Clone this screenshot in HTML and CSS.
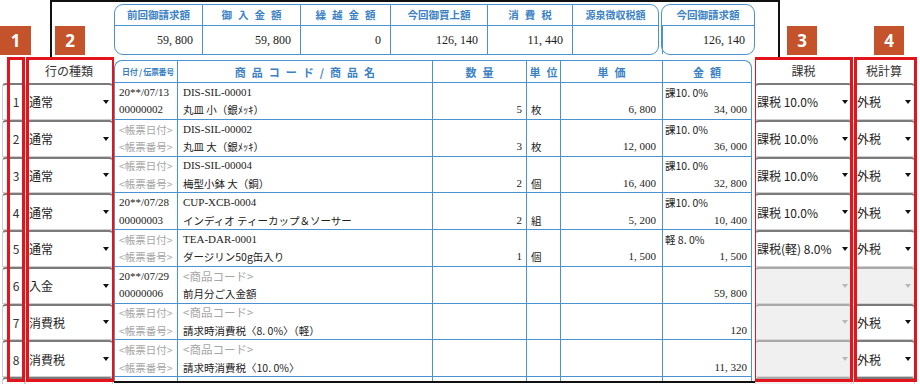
FILE: index.html
```html
<!DOCTYPE html>
<html lang="ja">
<head>
<meta charset="UTF-8">
<title>売上伝票入力</title>
<link rel="stylesheet" href="styles.css">
</head>
<body>
<div class="sheet">

  <!-- left grid: row no. / row type -->
  <div class="side left">
    <div class="side-head">
      <span class="badge b1">1</span>
      <div class="frame-l"><span class="badge">2</span></div>
    </div>
    <div class="grid-head"><span class="h-kind">行の種類</span></div>
    <div class="g-row"><div class="cell num">1</div><div class="cell kind pick">通常</div></div>
    <div class="g-row"><div class="cell num">2</div><div class="cell kind pick">通常</div></div>
    <div class="g-row"><div class="cell num">3</div><div class="cell kind pick">通常</div></div>
    <div class="g-row"><div class="cell num">4</div><div class="cell kind pick">通常</div></div>
    <div class="g-row"><div class="cell num">5</div><div class="cell kind pick">通常</div></div>
    <div class="g-row"><div class="cell num">6</div><div class="cell kind pick">入金</div></div>
    <div class="g-row"><div class="cell num">7</div><div class="cell kind pick">消費税</div></div>
    <div class="g-row"><div class="cell num">8</div><div class="cell kind pick">消費税</div></div>
    <div class="g-row"><div class="cell num"></div><div class="cell kind"></div></div>
    <div class="mark m1"></div>
    <div class="mark m2"></div>
  </div>

  <!-- slip body -->
  <div class="center">
    <div class="summary">
      <div class="sum-box">
        <div class="sum-h">前回御請求額</div>
        <div class="sum-h sp">御入金額</div>
        <div class="sum-h sp">繰越金額</div>
        <div class="sum-h">今回御買上額</div>
        <div class="sum-h sp">消費税</div>
        <div class="sum-h small">源泉徴収税額</div>
        <div class="sum-v">59, 800</div>
        <div class="sum-v">59, 800</div>
        <div class="sum-v">0</div>
        <div class="sum-v">126, 140</div>
        <div class="sum-v">11, 440</div>
        <div class="sum-v"></div>
      </div>
      <div class="sum-box total">
        <div class="sum-h">今回御請求額</div>
        <div class="sum-v">126, 140</div>
      </div>
    </div>

    <div class="items">
      <div class="i-row i-head">
        <div class="c-date">日付 / 伝票番号</div>
        <div class="sp">商品コード/商品名</div>
        <div class="sp">数量</div>
        <div class="sp">単位</div>
        <div class="sp">単価</div>
        <div class="sp">金額</div>
      </div>

      <div class="i-row">
        <div class="c-date"><span>20**/07/13</span><span>00000002</span></div>
        <div class="c-name"><span>DIS-SIL-00001</span><span class="jp">丸皿 小（銀ﾒｯｷ）</span></div>
        <div class="c-qty">5</div>
        <div class="c-unit jp">枚</div>
        <div class="c-price">6, 800</div>
        <div class="c-amt"><span class="jp">課10. 0%</span><span class="r">34, 000</span></div>
      </div>
      <div class="i-row">
        <div class="c-date"><span class="ph">&lt;帳票日付&gt;</span><span class="ph">&lt;帳票番号&gt;</span></div>
        <div class="c-name"><span>DIS-SIL-00002</span><span class="jp">丸皿 大（銀ﾒｯｷ）</span></div>
        <div class="c-qty">3</div>
        <div class="c-unit jp">枚</div>
        <div class="c-price">12, 000</div>
        <div class="c-amt"><span class="jp">課10. 0%</span><span class="r">36, 000</span></div>
      </div>
      <div class="i-row">
        <div class="c-date"><span class="ph">&lt;帳票日付&gt;</span><span class="ph">&lt;帳票番号&gt;</span></div>
        <div class="c-name"><span>DIS-SIL-00004</span><span class="jp">梅型小鉢 大（銅）</span></div>
        <div class="c-qty">2</div>
        <div class="c-unit jp">個</div>
        <div class="c-price">16, 400</div>
        <div class="c-amt"><span class="jp">課10. 0%</span><span class="r">32, 800</span></div>
      </div>
      <div class="i-row">
        <div class="c-date"><span>20**/07/28</span><span>00000003</span></div>
        <div class="c-name"><span>CUP-XCB-0004</span><span class="jp">インディオ ティーカップ＆ソーサー</span></div>
        <div class="c-qty">2</div>
        <div class="c-unit jp">組</div>
        <div class="c-price">5, 200</div>
        <div class="c-amt"><span class="jp">課10. 0%</span><span class="r">10, 400</span></div>
      </div>
      <div class="i-row">
        <div class="c-date"><span class="ph">&lt;帳票日付&gt;</span><span class="ph">&lt;帳票番号&gt;</span></div>
        <div class="c-name"><span>TEA-DAR-0001</span><span class="jp">ダージリン50g缶入り</span></div>
        <div class="c-qty">1</div>
        <div class="c-unit jp">個</div>
        <div class="c-price">1, 500</div>
        <div class="c-amt"><span class="jp">軽 8. 0%</span><span class="r">1, 500</span></div>
      </div>
      <div class="i-row">
        <div class="c-date"><span>20**/07/29</span><span>00000006</span></div>
        <div class="c-name"><span class="ph">&lt;商品コード&gt;</span><span class="jp">前月分ご入金額</span></div>
        <div class="c-qty"></div>
        <div class="c-unit"></div>
        <div class="c-price"></div>
        <div class="c-amt"><span class="r">59, 800</span></div>
      </div>
      <div class="i-row">
        <div class="c-date"><span class="ph">&lt;帳票日付&gt;</span><span class="ph">&lt;帳票番号&gt;</span></div>
        <div class="c-name"><span class="ph">&lt;商品コード&gt;</span><span class="jp">請求時消費税〈8. 0%〉（軽）</span></div>
        <div class="c-qty"></div>
        <div class="c-unit"></div>
        <div class="c-price"></div>
        <div class="c-amt"><span class="r">120</span></div>
      </div>
      <div class="i-row">
        <div class="c-date"><span class="ph">&lt;帳票日付&gt;</span><span class="ph">&lt;帳票番号&gt;</span></div>
        <div class="c-name"><span class="ph">&lt;商品コード&gt;</span><span class="jp">請求時消費税〈10. 0%〉</span></div>
        <div class="c-qty"></div>
        <div class="c-unit"></div>
        <div class="c-price"></div>
        <div class="c-amt"><span class="r">11, 320</span></div>
      </div>
      <div class="i-row">
        <div class="c-date"></div>
        <div class="c-name"></div>
        <div class="c-qty"></div>
        <div class="c-unit"></div>
        <div class="c-price"></div>
        <div class="c-amt"></div>
      </div>
    </div>
  </div>

  <!-- right grid: tax type / tax calc -->
  <div class="side right">
    <div class="side-head">
      <div class="frame-r"></div>
      <span class="badge b3">3</span>
      <span class="badge b4">4</span>
    </div>
    <div class="grid-head"><span class="h-kazei">課税</span><span class="h-zei">税計算</span></div>
    <div class="g-row"><div class="cell kazei pick">課税 10.0%</div><div class="cell zei pick">外税</div></div>
    <div class="g-row"><div class="cell kazei pick">課税 10.0%</div><div class="cell zei pick">外税</div></div>
    <div class="g-row"><div class="cell kazei pick">課税 10.0%</div><div class="cell zei pick">外税</div></div>
    <div class="g-row"><div class="cell kazei pick">課税 10.0%</div><div class="cell zei pick">外税</div></div>
    <div class="g-row"><div class="cell kazei pick">課税(軽) 8.0%</div><div class="cell zei pick">外税</div></div>
    <div class="g-row"><div class="cell kazei pick off"></div><div class="cell zei pick off"></div></div>
    <div class="g-row"><div class="cell kazei pick off"></div><div class="cell zei pick">外税</div></div>
    <div class="g-row"><div class="cell kazei pick off"></div><div class="cell zei pick">外税</div></div>
    <div class="g-row"><div class="cell kazei off"></div><div class="cell zei"></div></div>
    <div class="mark m3"></div>
    <div class="mark m4"></div>
  </div>

</div>
</body>
</html>
```

FILE: styles.css
```css
* { box-sizing: border-box; }
body { margin: 0; width: 920px; height: 384px; overflow: hidden; background: #fff; color: #222;
  font-family: "Noto Sans CJK JP", sans-serif; }
.sheet { display: flex; height: 384px; overflow: hidden; }

/* side grids */
.side { position: relative; flex: none; height: 384px; overflow: hidden; }
.side.left { width: 114px; }
.side.right { width: 165px; }
.side-head { height: 57px; display: flex; align-items: flex-end; }

.badge { width: 30px; height: 29px; margin-bottom: 2px; background: #c4532c; color: #fff; text-align: center;
  font: bold 17px/29px "Open Sans", "Liberation Sans", sans-serif; }
.badge.b1 { width: 31px; }
.frame-l { flex: 1; align-self: stretch; margin-left: 19px; padding-left: 3px; display: flex; align-items: flex-end;
  border-top: 2px solid #111; border-left: 2px solid #111; }
.frame-r { width: 25px; align-self: stretch; border-top: 2px solid #111; border-right: 2px solid #111; }
.badge.b3 { margin-left: 7px; }
.badge.b4 { margin-left: 57px; }

.grid-head { height: 26px; display: flex; align-items: center; font-size: 12px; color: #333; }
.h-kind { margin-left: 25px; width: 88px; text-align: center; }
.h-kazei { width: 97px; text-align: center; }
.h-zei { width: 62px; margin-left: 1px; text-align: center; }

.g-row { display: flex; height: 36.75px; }
.left .g-row { padding-left: 2px; }
.cell { display: flex; align-items: center; background: #fff; font-size: 12px; color: #222;
  border: 1px solid #cdcdcd; border-top: 2px solid #7b7b7b; border-radius: 4px 4px 0 0; }
.cell.num { width: 23px; justify-content: center; padding-left: 5px; color: #333; }
.cell.kind { width: 88px; padding: 0 3px 0 3px; }
.cell.kazei { width: 97px; padding: 0 3px 0 1px; }
.cell.zei { width: 62px; margin-left: 1px; padding: 0 3px 0 3px; }
.pick { justify-content: space-between; }
.pick::after { content: ""; margin-left: auto; border-left: 3.5px solid transparent; border-right: 3.5px solid transparent;
  border-top: 4px solid #111; }
.cell.off { background: #f0f0f0; border-color: #d6d6d6; border-top-color: #a9a9a9; }
.cell.off::after { border-top-color: #b8b8b8; }

/* red annotation boxes */
.mark { position: absolute; top: 57px; height: 325px; border: 3px solid #e3141b; }
.m1 { left: 7px; width: 18px; }
.m2 { left: 26px; width: 89px; }
.m3 { left: -2px; width: 100px; }
.m4 { left: 99px; width: 63px; }

/* slip body */
.center { width: 641px; flex: none; height: 383px; padding-top: 2px; overflow: hidden;
  border-top: 2px solid #111; border-bottom: 2px solid #111; }

.summary { display: flex; gap: 2px; height: 51px; }
.sum-box { width: 545px; display: grid; grid-template-columns: 87px 98px 90px 97px 85px 1fr; grid-template-rows: 21px 1fr;
  border: 1px solid #4b92d2; border-radius: 9px; }
.sum-box.total { width: 94px; grid-template-columns: 1fr; }
.sum-box > div:nth-child(n+2):not(:nth-child(7)) { border-left: 1px solid #4b92d2; }
.sum-box.total > div { border-left: 0; }
.sum-h { border-bottom: 1px solid #4b92d2; color: #3b82c4; font-size: 10.5px; font-weight: bold; text-align: center; line-height: 19px; }
.sum-h.small { font-size: 10px; }
.sp { letter-spacing: 6px; text-indent: 6px; }
.sum-v { display: flex; align-items: center; justify-content: flex-end; padding-right: 9px;
  font: 12px "Liberation Serif", "Noto Sans CJK JP", serif; }

.items { width: 638px; margin-top: 5px; border: 1px solid #4b92d2; border-bottom: 0; border-radius: 8px 8px 0 0; }
.i-row { display: grid; grid-template-columns: 63px 255px 94px 34px 102px 88px; height: 36.75px;
  border-bottom: 1px solid #4b92d2; font: 11px/17.5px "Liberation Serif", "Noto Sans CJK JP", serif; }
.i-row > div { display: flex; flex-direction: column; justify-content: flex-end; border-right: 1px solid #4b92d2; white-space: nowrap; }
.i-row > div:last-child { border-right: 0; }
.i-head { height: 22px; }
.i-head > div { justify-content: center; align-items: center; color: #3b82c4; font: bold 11px "Noto Sans CJK JP", sans-serif; }
.i-head > div.sp { letter-spacing: 6px; text-indent: 6px; }
.i-head > .c-date { font-size: 8px; letter-spacing: -0.3px; text-indent: 0; }

.jp { font-family: "Noto Sans CJK JP", sans-serif; font-size: 10.5px; }
.ph { color: #a5a5a5; font-family: "Noto Sans CJK JP", sans-serif; font-size: 10.5px; }
.c-date { padding-left: 4px; }
.c-name { padding-left: 5px; }
.c-name .ph { font-size: 11.5px; }
.c-qty { align-items: flex-end; padding-right: 4px; }
.c-unit { padding-left: 4px; }
.c-price { align-items: flex-end; padding-right: 6px; }
.c-amt { padding: 0 4px 0 2px; }
.c-amt .r { text-align: right; }
```
